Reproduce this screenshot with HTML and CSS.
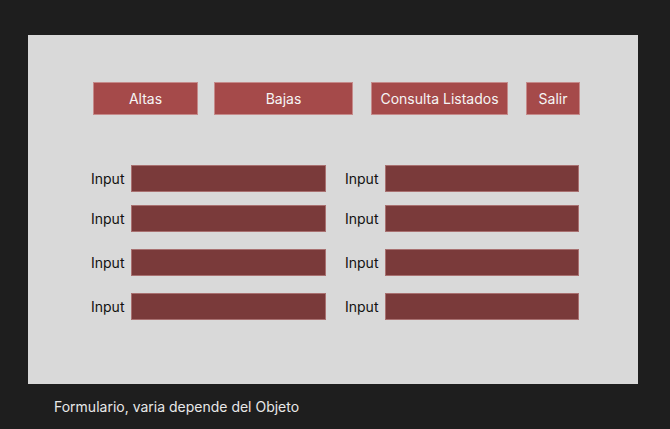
FILE: index.html
```html
<!DOCTYPE html>
<html lang="es">
<head>
  <meta charset="UTF-8">
  <title>Formulario</title>
  <link rel="stylesheet" href="styles.css">
</head>
<body>

  <div class="frame">
    <div class="menu">
      <div class="boton altas">Altas</div>
      <div class="boton bajas">Bajas</div>
      <div class="boton consulta">Consulta Listados</div>
      <div class="boton salir">Salir</div>
    </div>

    <div class="campos">
      <div class="fila primera">
        <div class="campo"><span>Input</span><div class="caja"></div></div>
        <div class="campo"><span>Input</span><div class="caja"></div></div>
      </div>
      <div class="fila">
        <div class="campo"><span>Input</span><div class="caja"></div></div>
        <div class="campo"><span>Input</span><div class="caja"></div></div>
      </div>
      <div class="fila">
        <div class="campo"><span>Input</span><div class="caja"></div></div>
        <div class="campo"><span>Input</span><div class="caja"></div></div>
      </div>
      <div class="fila">
        <div class="campo"><span>Input</span><div class="caja"></div></div>
        <div class="campo"><span>Input</span><div class="caja"></div></div>
      </div>
    </div>
  </div>

  <p class="nota">Formulario, varia depende del Objeto</p>

</body>
</html>
```

FILE: styles.css
```css
body {
  margin: 0;
  background: #1e1e1e;
  font-family: Inter, "Noto Sans", sans-serif;
  padding: 35px 0 0 28px;
}

.frame {
  width: 610px;
  height: 349px;
  box-sizing: border-box;
  background: #d9d9d9;
  padding: 47px 0 0 65px;
}

.menu {
  display: flex;
  height: 33px;
}

.boton {
  box-sizing: border-box;
  background: #a54a4a;
  border: 1px solid #c58a8a;
  color: #f5f5f5;
  font-size: 14px;
  display: flex;
  align-items: center;
  justify-content: center;
}

.altas { width: 105px; margin-right: 16px; }
.bajas { width: 139px; margin-right: 18px; }
.consulta { width: 137px; margin-right: 18px; }
.salir { width: 54px; }

.campos {
  display: flex;
  flex-direction: column;
  gap: 17px;
  margin: 50px 0 0 -2px;
}

.fila {
  display: flex;
  gap: 19px;
}

.fila.primera {
  margin-bottom: -4px;
}

.campo {
  width: 235px;
  display: flex;
  align-items: center;
  font-size: 14px;
  color: #111;
}

.campo + .campo {
  width: 234px;
}

.campo span {
  width: 40px;
}

.caja {
  flex: 1;
  height: 27px;
  box-sizing: border-box;
  background: #7a3a3a;
  border: 1px solid #a87070;
}

.nota {
  margin: 14px 0 0 26px;
  color: #e8e8e8;
  font-size: 14px;
}
```
